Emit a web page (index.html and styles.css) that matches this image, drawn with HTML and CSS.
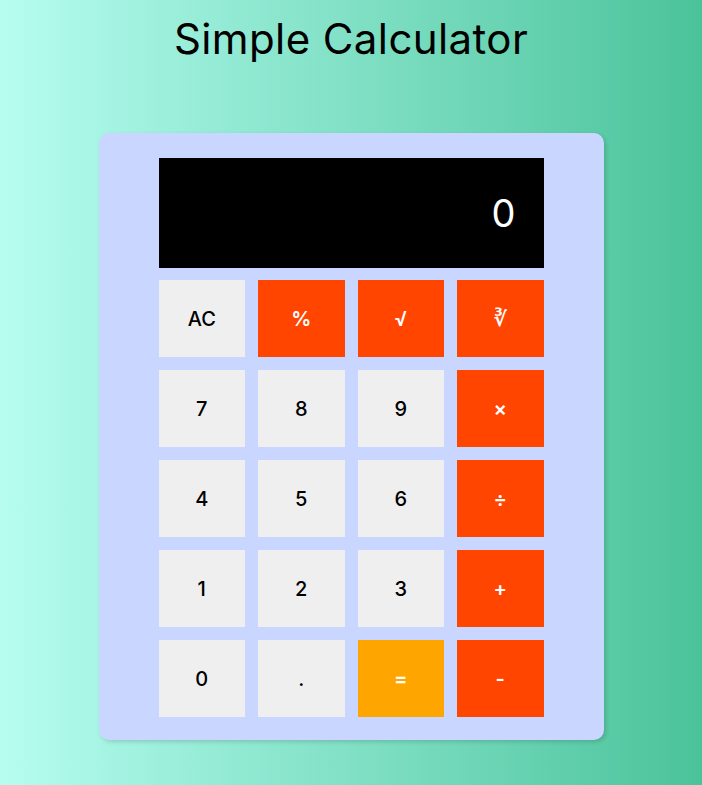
FILE: index.html
```html
<!DOCTYPE html>
<html>
<head>
<meta charset="utf-8">
<link rel="stylesheet" href="styles.css">
</head>
<body>
<h1 class="title">Simple Calculator</h1>
<div class="calc">
  <div class="display">0</div>
  <div class="keys">
    <button class="key">AC</button>
    <button class="key op">%</button>
    <button class="key op">√</button>
    <button class="key op">∛</button>
    <button class="key">7</button>
    <button class="key">8</button>
    <button class="key">9</button>
    <button class="key op">×</button>
    <button class="key">4</button>
    <button class="key">5</button>
    <button class="key">6</button>
    <button class="key op">÷</button>
    <button class="key">1</button>
    <button class="key">2</button>
    <button class="key">3</button>
    <button class="key op">+</button>
    <button class="key">0</button>
    <button class="key">.</button>
    <button class="key eq">=</button>
    <button class="key op">-</button>
  </div>
</div>
</body>
</html>
```
FILE: styles.css
```css
html, body {
  margin: 0;
  height: 100%;
}
body {
  background: linear-gradient(to right, #b6fdf0, #4bc39a);
  font-family: "Inter", "DejaVu Sans", sans-serif;
  overflow: hidden;
}
.title {
  margin: 0;
  padding-top: 14px;
  height: 133px;
  box-sizing: border-box;
  text-align: center;
  font-size: 42px;
  font-weight: 400;
  letter-spacing: 0.4px;
  line-height: 50px;
  color: #000;
}
.calc {
  width: 505px;
  margin: 0 auto;
  box-sizing: border-box;
  padding: 25px 60px 23px;
  background: #c9d6ff;
  border-radius: 10px;
  box-shadow: 2px 2px 4px rgba(0,0,0,0.15);
}
.display {
  height: 110px;
  background: #000;
  color: #fff;
  font-size: 38px;
  text-align: right;
  line-height: 110px;
  padding-right: 28px;
  margin-bottom: 12px;
}
.keys {
  display: grid;
  grid-template-columns: repeat(4, 1fr);
  grid-auto-rows: 77px;
  column-gap: 13px;
  row-gap: 13px;
}
.key {
  border: none;
  margin: 0;
  padding: 0;
  background: #efefef;
  color: #000;
  font-family: inherit;
  font-size: 20px;
  font-weight: 500;
}
.key.op {
  background: #ff4500;
  color: #fff;
  font-weight: 600;
}
.key.eq {
  background: #ffa500;
  color: #fff;
  font-weight: 600;
}
```
